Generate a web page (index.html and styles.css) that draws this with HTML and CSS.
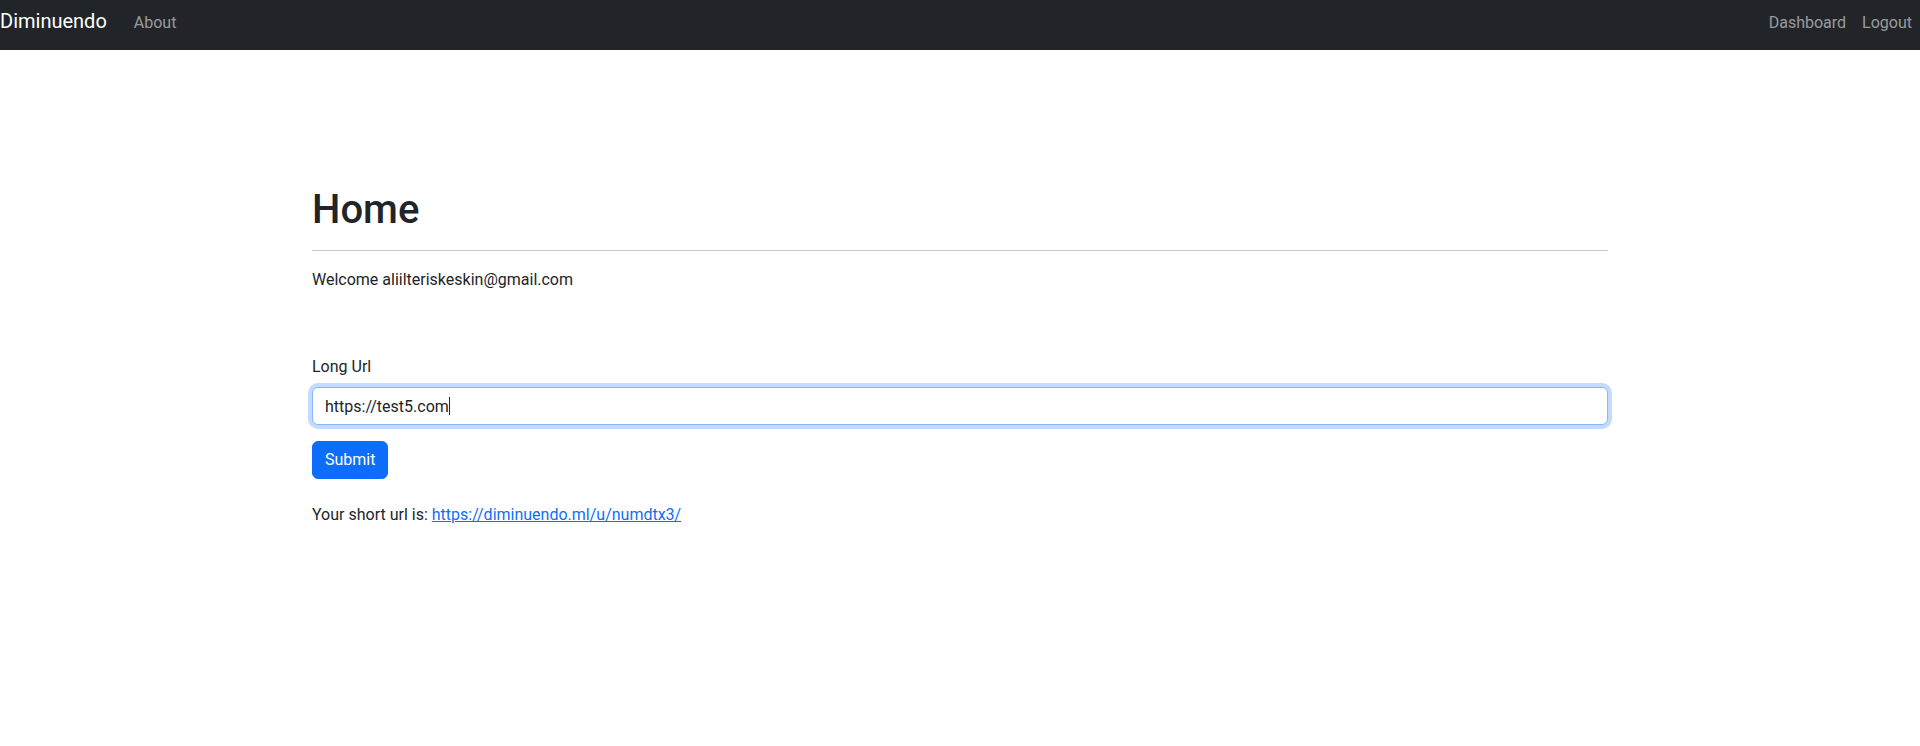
FILE: index.html
```html
<!DOCTYPE html>
<html lang="en">
<head>
<meta charset="utf-8">
<title>Diminuendo</title>
<link rel="stylesheet" href="styles.css">
</head>
<body>
<nav class="navbar">
  <div class="nav-left">
    <a class="brand" href="#">Diminuendo</a>
    <a class="nav-link" href="#">About</a>
  </div>
  <div class="nav-right">
    <a class="nav-link" href="#">Dashboard</a>
    <a class="nav-link" href="#">Logout</a>
  </div>
</nav>
<main class="container">
  <h1 class="title">Home</h1>
  <hr class="divider">
  <p class="welcome">Welcome aliilteriskeskin@gmail.com</p>
  <form class="url-form">
    <label class="form-label" for="longurl">Long Url</label>
    <div class="input-wrap">
      <input class="form-control" id="longurl" type="text" value="https://test5.com">
      <div class="caret-layer" aria-hidden="true"><span class="ghost">https://test5.com</span><span class="caret"></span></div>
    </div>
    <button class="btn-primary" type="button">Submit</button>
  </form>
  <p class="result">Your short url is: <a class="short-link" href="#">https://diminuendo.ml/u/numdtx3/</a></p>
</main>
</body>
</html>
```
FILE: styles.css
```css
* { box-sizing: border-box; }
html, body { margin: 0; padding: 0; }
body {
  font-family: Roboto, "Liberation Sans", sans-serif;
  font-size: 16px;
  line-height: 24px;
  color: #212529;
  background: #fff;
}
.navbar {
  height: 50px;
  background: #212529;
  display: flex;
  justify-content: space-between;
  align-items: baseline;
  padding: 6px 0 0 0;
}
.nav-left, .nav-right {
  display: flex;
  align-items: baseline;
}
.brand {
  font-size: 20px;
  line-height: 30px;
  color: #fff;
  text-decoration: none;
  margin-right: 19px;
}
.nav-link {
  color: rgba(255, 255, 255, 0.55);
  text-decoration: none;
  padding: 0 8px;
}
.container {
  max-width: 1320px;
  margin: 0 auto;
  padding: 136px 12px 0;
}
.title {
  font-size: 40px;
  line-height: 48px;
  font-weight: 500;
  margin: 0;
}
.divider {
  margin: 16px 0 17px;
  border: 0;
  border-top: 1px solid #c8c9ca;
  height: 0;
}
.welcome {
  margin: 0 0 63px;
}
.url-form {
  display: flex;
  flex-direction: column;
  align-items: flex-start;
  margin-bottom: 24px;
}
.form-label {
  margin-bottom: 8px;
}
.input-wrap {
  position: relative;
  width: 100%;
  margin-bottom: 16px;
}
.form-control {
  display: block;
  width: 100%;
  height: 38px;
  padding: 6px 12px;
  font: inherit;
  color: #212529;
  border: 1px solid #86b7fe;
  border-radius: 6px;
  box-shadow: 0 0 0 4px rgba(13, 110, 253, 0.25);
  outline: none;
}
.caret-layer {
  position: absolute;
  top: 0;
  left: 0;
  padding: 7px 13px;
  pointer-events: none;
  display: flex;
  align-items: center;
  height: 38px;
}
.ghost {
  color: transparent;
}
.caret {
  display: inline-block;
  width: 1px;
  height: 18px;
  background: #212529;
}
.btn-primary {
  font: inherit;
  color: #fff;
  background: #0d6efd;
  border: 1px solid #0d6efd;
  border-radius: 6px;
  padding: 6px 12px;
  height: 38px;
  cursor: pointer;
}
.result {
  margin: 0;
}
.short-link {
  color: #0d6efd;
  text-decoration: underline;
}
```
